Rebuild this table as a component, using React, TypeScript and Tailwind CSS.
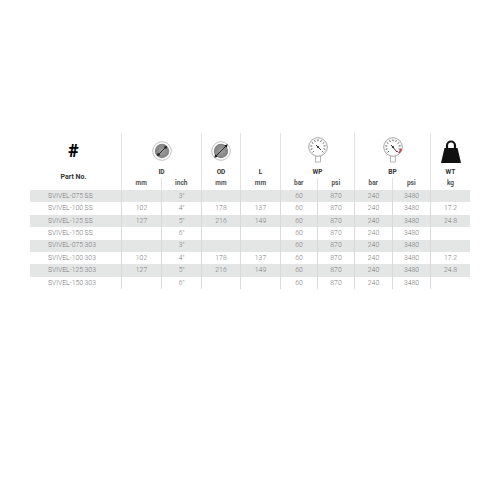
import React from "react";

const rows = [
  { p: "SVIVEL-075 SS", idmm: "", inch: "3\"", od: "", l: "", wpb: "60", wpp: "870", bpb: "240", bpp: "3480", kg: "" },
  { p: "SVIVEL-100 SS", idmm: "102", inch: "4\"", od: "178", l: "137", wpb: "60", wpp: "870", bpb: "240", bpp: "3480", kg: "17.2" },
  { p: "SVIVEL-125 SS", idmm: "127", inch: "5\"", od: "216", l: "149", wpb: "60", wpp: "870", bpb: "240", bpp: "3480", kg: "24.8" },
  { p: "SVIVEL-150 SS", idmm: "", inch: "6\"", od: "", l: "", wpb: "60", wpp: "870", bpb: "240", bpp: "3480", kg: "" },
  { p: "SVIVEL-075 303", idmm: "", inch: "3\"", od: "", l: "", wpb: "60", wpp: "870", bpb: "240", bpp: "3480", kg: "" },
  { p: "SVIVEL-100 303", idmm: "102", inch: "4\"", od: "178", l: "137", wpb: "60", wpp: "870", bpb: "240", bpp: "3480", kg: "17.2" },
  { p: "SVIVEL-125 303", idmm: "127", inch: "5\"", od: "216", l: "149", wpb: "60", wpp: "870", bpb: "240", bpp: "3480", kg: "24.8" },
  { p: "SVIVEL-150 303", idmm: "", inch: "6\"", od: "", l: "", wpb: "60", wpp: "870", bpb: "240", bpp: "3480", kg: "" },
];

const widths = ["w-[92px]", "w-[40px]", "w-[40px]", "w-[39px]", "w-[40px]", "w-[37px]", "w-[37px]", "w-[38px]", "w-[38px]", "w-[39px]"];

function DiaIcon({ outer }: { outer: boolean }) {
  const d = outer ? 9.5 * 0.7071 : 7.2 * 0.7071;
  const id = outer ? "g2" : "g1";
  return (
    <svg width="24" height="24" viewBox="-12 -12 24 24">
      <defs>
        <radialGradient id={id}>
          <stop offset="0" stopColor="#a0a0a0" />
          <stop offset="1" stopColor="#808080" />
        </radialGradient>
      </defs>
      <circle r="9.3" fill="#fff" stroke="#b8b8b8" strokeWidth="0.9" />
      <circle r="7.2" fill={`url(#${id})`} />
      <line x1={-d + 1.8} y1={d - 1.8} x2={d - 1.8} y2={-d + 1.8} stroke="#1a1a1a" strokeWidth="0.9" />
      <polygon points={`${d},${-d} ${d - 3.4},${-d + 0.9} ${d - 0.9},${-d + 3.4}`} fill="#1a1a1a" />
      <polygon points={`${-d},${d} ${-d + 3.4},${d - 0.9} ${-d + 0.9},${d - 3.4}`} fill="#1a1a1a" />
    </svg>
  );
}

function Gauge({ red }: { red: boolean }) {
  const ticks = [];
  for (let i = 0; i <= 10; i++) {
    const a = (-225 + i * 27) * (Math.PI / 180);
    ticks.push(
      <line key={i} x1={Math.cos(a) * 5.8} y1={Math.sin(a) * 5.8} x2={Math.cos(a) * 7.6} y2={Math.sin(a) * 7.6} stroke="#333" strokeWidth="0.8" />
    );
  }
  return (
    <svg width="24" height="27" viewBox="-12 -10 24 27">
      <rect x="-2.5" y="8" width="5" height="7" fill="#fff" stroke="#999" strokeWidth="0.7" />
      <circle r="9.3" fill="#fff" stroke="#999" strokeWidth="0.9" />
      <circle r="8.3" fill="none" stroke="#ddd" strokeWidth="0.5" />
      {red && <path d="M 5.3 5.3 A 7.5 7.5 0 0 0 7.3 1.5 L 9 2 A 9.3 9.3 0 0 1 6.5 6.5 Z" fill="#d2354f" />}
      {ticks}
      <line x1="-2" y1="-2" x2={red ? 4 : 3} y2={red ? 5 : 3} stroke="#222" strokeWidth="0.9" />
      <circle r="1" fill="#222" />
    </svg>
  );
}

function Weight() {
  return (
    <svg width="22" height="24" viewBox="0 0 22 24" className="mt-[3px]">
      <path d="M7 8 V5.5 A4 4 0 0 1 15 5.5 V8" fill="none" stroke="#111" strokeWidth="2.2" />
      <path d="M4.5 8 H17.5 L21 23 H1 Z" fill="#111" />
    </svg>
  );
}

function Group({ w, label, icon, units, last }: { w: string; label: string; icon: React.ReactNode; units: { t: string; w: string }[]; last?: boolean }) {
  return (
    <div className={`${w} flex flex-col ${last ? "" : "border-r border-[#e2e2e2]"}`}>
      <div className="h-[45px] flex flex-col items-center justify-end pb-[3px]">
        <div className="flex items-center justify-center h-[30px]">{icon}</div>
        <div className="text-[6.5px] font-bold text-[#333] leading-none mt-[3px]">{label}</div>
      </div>
      <div className="h-[12px] flex">
        {units.map((u, i) => (
          <div key={i} className={`${u.w} flex items-center justify-center text-[6.5px] font-bold text-[#555] ${i < units.length - 1 ? "border-r border-[#e2e2e2]" : ""}`}>
            {u.t}
          </div>
        ))}
      </div>
    </div>
  );
}

export default function App() {
  return (
    <div className="w-[500px] h-[500px] bg-white pt-[133px] pl-[30px]" style={{ fontFamily: "Roboto, 'Liberation Sans', sans-serif" }}>
      <div className="w-[440px]">
        <div className="flex h-[57px]">
          <div className="w-[92px] border-r border-[#e2e2e2] flex flex-col items-center pt-[9px] pr-[4px]">
            <div className="text-[18px] font-black text-black leading-none">#</div>
            <div className="text-[7px] font-bold text-[#333] leading-none mt-[14px]">Part No.</div>
          </div>
          <Group w="w-[80px]" label="ID" icon={<DiaIcon outer={false} />} units={[{ t: "mm", w: "w-[40px]" }, { t: "inch", w: "w-[40px]" }]} />
          <Group w="w-[39px]" label="OD" icon={<DiaIcon outer />} units={[{ t: "mm", w: "w-[39px]" }]} />
          <Group w="w-[40px]" label="L" icon={null} units={[{ t: "mm", w: "w-[40px]" }]} />
          <Group w="w-[74px]" label="WP" icon={<Gauge red={false} />} units={[{ t: "bar", w: "w-[37px]" }, { t: "psi", w: "w-[37px]" }]} />
          <Group w="w-[76px]" label="BP" icon={<Gauge red />} units={[{ t: "bar", w: "w-[38px]" }, { t: "psi", w: "w-[38px]" }]} />
          <Group w="w-[39px]" label="WT" icon={<Weight />} units={[{ t: "kg", w: "w-[39px]" }]} last />
        </div>
        {rows.map((r, i) => {
          const vals = [r.p, r.idmm, r.inch, r.od, r.l, r.wpb, r.wpp, r.bpb, r.bpp, r.kg];
          return (
            <div key={i} className={`flex h-[12.4px] ${i % 2 === 0 ? "bg-[#e4e6e6]" : "bg-white"}`}>
              {vals.map((v, j) => (
                <div
                  key={j}
                  className={`${widths[j]} flex items-center text-[6.8px] font-light text-[#777777] leading-none ${j === 0 ? "justify-start pl-[18px]" : "justify-center"} ${j < 9 ? "border-r border-[#d9dbdb]" : ""}`}
                >
                  {v}
                </div>
              ))}
            </div>
          );
        })}
      </div>
    </div>
  );
}
